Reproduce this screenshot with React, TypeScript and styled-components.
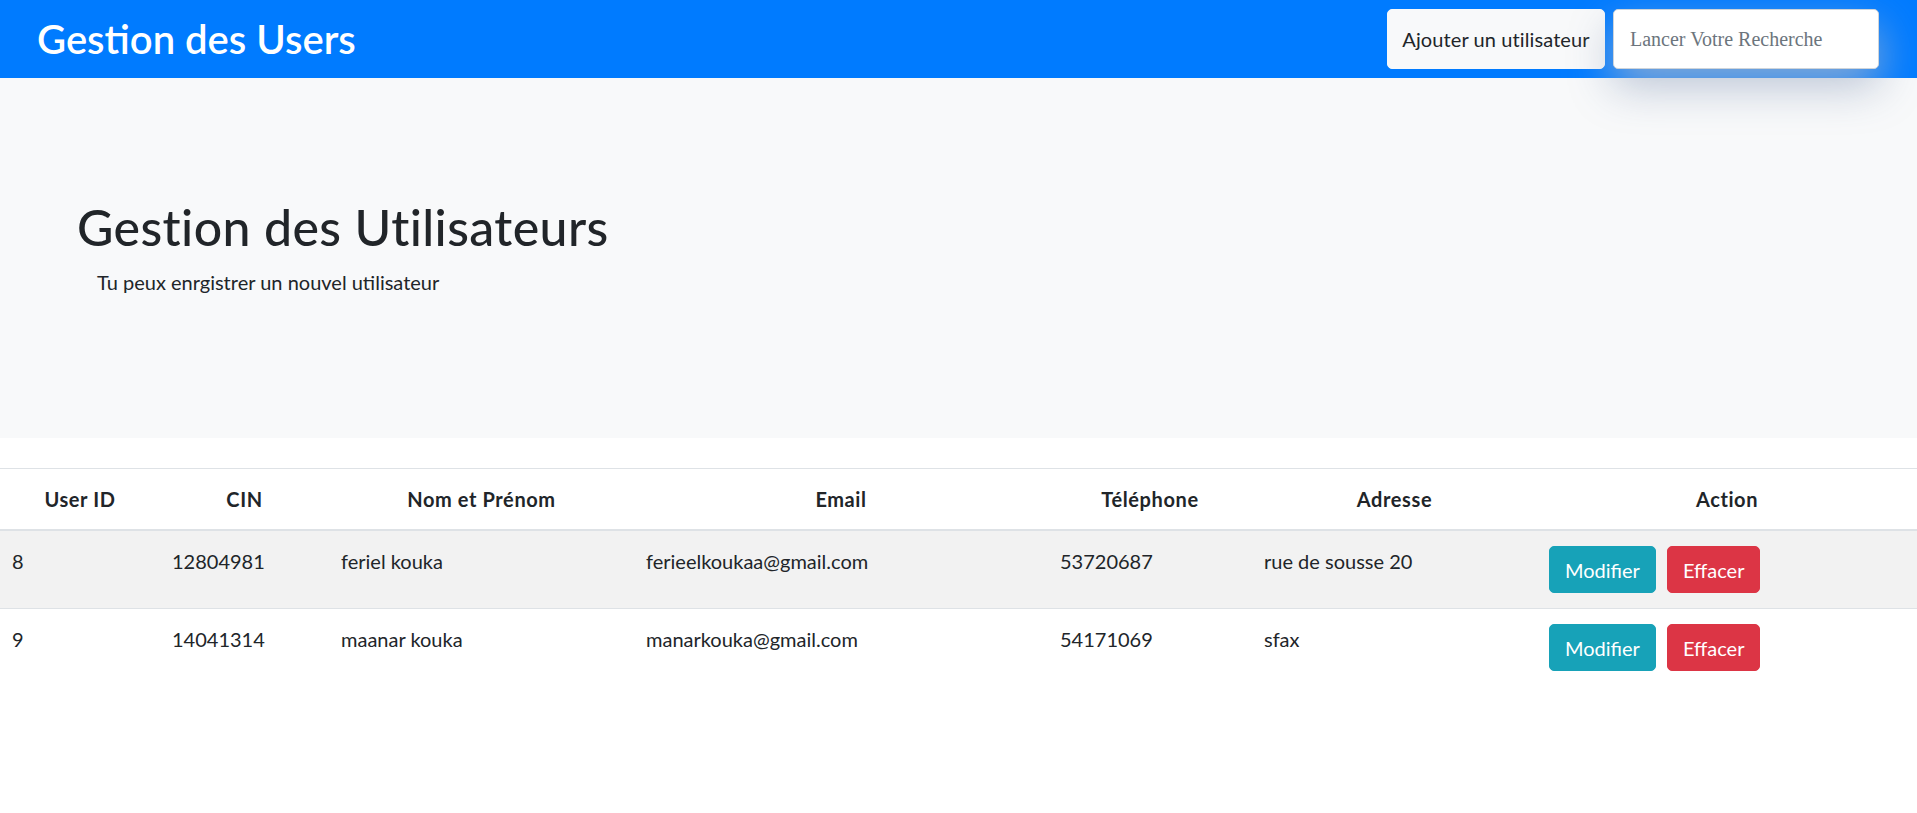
import React from "react";
import styled, { createGlobalStyle } from "styled-components";

const GlobalStyle = createGlobalStyle`
  html, body {
    margin: 0;
    padding: 0;
    background: #ffffff;
  }
  body {
    font-family: Lato, "Open Sans", Arial, sans-serif;
    color: #212529;
    font-size: 20px;
    line-height: 1.5;
  }
  * { box-sizing: border-box; }
`;

const NavBar = styled.nav`
  position: relative;
  z-index: 1;
  height: 78px;
  background: #007bff;
  display: flex;
  align-items: center;
  justify-content: space-between;
  padding: 0 38px 0 37px;
`;

const Brand = styled.h1`
  margin: 0;
  color: #ffffff;
  font-size: 40px;
  font-weight: 600;
  line-height: 1.2;
`;

const NavActions = styled.div`
  display: flex;
  align-items: center;
  gap: 8px;
`;

const AddButton = styled.button`
  height: 60px;
  width: 218px;
  padding: 0 14px;
  background: #f8f9fa;
  border: 1px solid #f8f9fa;
  border-radius: 5px;
  color: #212529;
  font-family: Lato, "Open Sans", Arial, sans-serif;
  font-size: 20px;
  letter-spacing: 0.1px;
  cursor: pointer;
`;

const SearchInput = styled.input`
  height: 60px;
  width: 266px;
  padding: 0 16px;
  background: #ffffff;
  border: 1px solid #ced4da;
  border-radius: 5px;
  font-family: "Liberation Serif", "Times New Roman", serif;
  font-size: 20px;
  color: #495057;
  box-shadow: 0 18px 44px rgba(170, 182, 204, 0.8);
  outline: none;
  &::placeholder {
    color: #6c757d;
  }
`;

const Jumbotron = styled.section`
  height: 360px;
  background: #f8f9fa;
  padding: 119px 77px 0;
  margin-bottom: 30px;
`;

const Title = styled.h2`
  margin: 0 0 10px;
  font-size: 50px;
  font-weight: 500;
  letter-spacing: 0.4px;
  line-height: 1.2;
  color: #212529;
`;

const Lead = styled.p`
  margin: 0 0 0 20px;
  font-size: 20px;
  line-height: 1.5;
`;

const Table = styled.table`
  width: 100%;
  border-collapse: collapse;
  table-layout: fixed;
`;

const HeadCell = styled.th`
  padding: 15px 12px;
  text-align: center;
  font-weight: 700;
  font-size: 20px;
  letter-spacing: 0.6px;
  line-height: 30px;
  border-top: 1px solid #dee2e6;
  border-bottom: 2px solid #dee2e6;
  vertical-align: bottom;
`;

const Row = styled.tr<{ $striped?: boolean }>`
  background: ${(p) => (p.$striped ? "#f2f2f2" : "transparent")};
`;

const Cell = styled.td`
  padding: 15px 12px;
  font-size: 20px;
  line-height: 30px;
  vertical-align: top;
  border-top: 1px solid #dee2e6;
`;

const ActionButton = styled.button<{ $variant: "info" | "danger" }>`
  height: 47px;
  padding: 0 15px;
  margin-right: 11px;
  border: 1px solid ${(p) => (p.$variant === "info" ? "#17a2b8" : "#dc3545")};
  background: ${(p) => (p.$variant === "info" ? "#17a2b8" : "#dc3545")};
  color: #ffffff;
  border-radius: 5px;
  font-family: Lato, "Open Sans", Arial, sans-serif;
  font-size: 20px;
  line-height: 30px;
  cursor: pointer;
  vertical-align: top;
`;

type User = {
  id: number;
  cin: string;
  name: string;
  email: string;
  phone: string;
  address: string;
};

const users: User[] = [
  { id: 8, cin: "12804981", name: "feriel kouka", email: "ferieelkoukaa@gmail.com", phone: "53720687", address: "rue de sousse 20" },
  { id: 9, cin: "14041314", name: "maanar kouka", email: "manarkouka@gmail.com", phone: "54171069", address: "sfax" },
];

const columns = [
  { label: "User ID", width: 160 },
  { label: "CIN", width: 169 },
  { label: "Nom et Prénom", width: 305 },
  { label: "Email", width: 414 },
  { label: "Téléphone", width: 204 },
  { label: "Adresse", width: 285 },
  { label: "Action", width: 380 },
];

export default function App() {
  return (
    <>
      <GlobalStyle />
      <NavBar>
        <Brand>Gestion des Users</Brand>
        <NavActions>
          <AddButton>Ajouter un utilisateur</AddButton>
          <SearchInput placeholder="Lancer Votre Recherche" />
        </NavActions>
      </NavBar>
      <Jumbotron>
        <Title>Gestion des Utilisateurs</Title>
        <Lead>Tu peux enrgistrer un nouvel utilisateur</Lead>
      </Jumbotron>
      <Table>
        <colgroup>
          {columns.map((c) => (
            <col key={c.label} style={{ width: c.width }} />
          ))}
        </colgroup>
        <thead>
          <tr>
            {columns.map((c) => (
              <HeadCell key={c.label}>{c.label}</HeadCell>
            ))}
          </tr>
        </thead>
        <tbody>
          {users.map((u, i) => (
            <Row key={u.id} $striped={i % 2 === 0}>
              <Cell>{u.id}</Cell>
              <Cell>{u.cin}</Cell>
              <Cell>{u.name}</Cell>
              <Cell>{u.email}</Cell>
              <Cell>{u.phone}</Cell>
              <Cell>{u.address}</Cell>
              <Cell>
                <ActionButton $variant="info">Modifier</ActionButton>
                <ActionButton $variant="danger">Effacer</ActionButton>
              </Cell>
            </Row>
          ))}
        </tbody>
      </Table>
    </>
  );
}
